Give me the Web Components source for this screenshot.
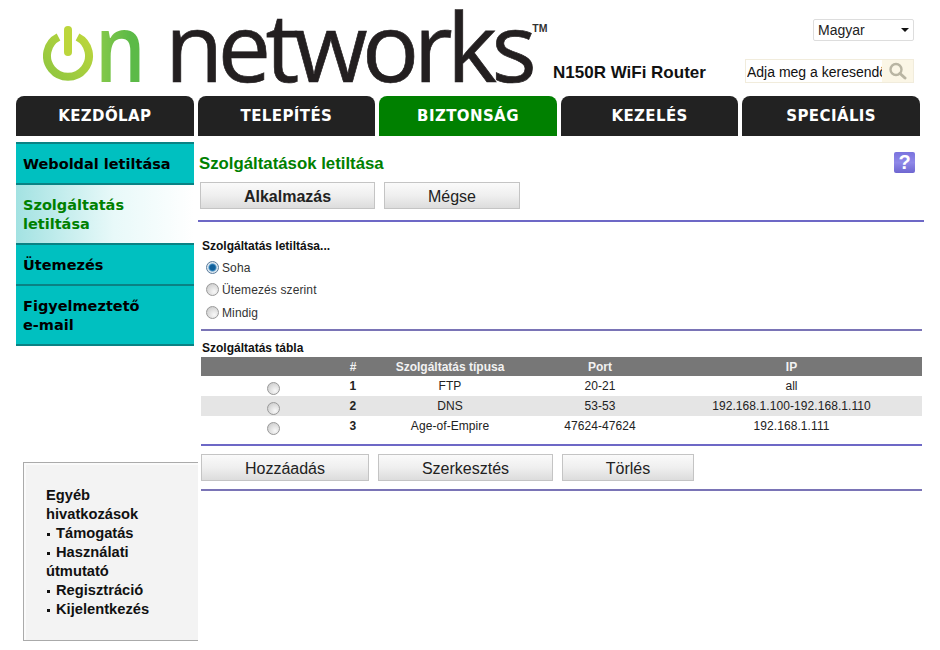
<!DOCTYPE html>
<html lang="hu">
<head>
<meta charset="utf-8">
<title>N150R WiFi Router</title>
<style>
  body { margin: 0; background: #fff; color: #222; font-family: "Liberation Sans", Arial, sans-serif; }
  .page-body { display: flex; align-items: flex-start; }
  .left-col { width: 182px; margin-left: 16px; flex: none; }
  .right-col { flex: none; width: 726px; }
  .btn-row { display: flex; gap: 9px; }
  .btn-row.top { margin: 9px 0 11px 2px; }
  .btn-row.bottom { margin: 8px 1px 8px 3px; }
</style>
</head>
<body>

<site-header></site-header>

<main-tabs>
  <tab-item>KEZDŐLAP</tab-item>
  <tab-item>TELEPÍTÉS</tab-item>
  <tab-item active>BIZTONSÁG</tab-item>
  <tab-item>KEZELÉS</tab-item>
  <tab-item>SPECIÁLIS</tab-item>
</main-tabs>

<div class="page-body">
  <div class="left-col">
    <side-menu>
      <menu-item>Weboldal letiltása</menu-item>
      <menu-item active>Szolgáltatás<br>letiltása</menu-item>
      <menu-item>Ütemezés</menu-item>
      <menu-item>Figyelmeztető<br>e-mail</menu-item>
    </side-menu>
    <other-links>
      <link-item>Támogatás</link-item>
      <link-item>Használati útmutató</link-item>
      <link-item>Regisztráció</link-item>
      <link-item>Kijelentkezés</link-item>
    </other-links>
  </div>

  <div class="right-col">
    <page-title>Szolgáltatások letiltása</page-title>
    <div class="btn-row top">
      <ui-button width="175" strong>Alkalmazás</ui-button>
      <ui-button width="136">Mégse</ui-button>
    </div>
    <h-rule wide></h-rule>

    <block-services></block-services>

    <h-rule muted></h-rule>

    <service-table></service-table>

    <h-rule></h-rule>
    <div class="btn-row bottom">
      <ui-button width="168">Hozzáadás</ui-button>
      <ui-button width="175">Szerkesztés</ui-button>
      <ui-button width="132">Törlés</ui-button>
    </div>
    <h-rule muted></h-rule>
  </div>
</div>

<script>
// header with the logo, the model name, language and search
class SiteHeader extends HTMLElement {
  constructor() {
    super();
    this.attachShadow({ mode: 'open' });
    this.shadowRoot.innerHTML = `
      <style>
        :host { display: flex; height: 96px; }
        .logo { display: flex; align-items: flex-start; margin-left: 43px; width: 510px; flex: none; }
        .logo svg { flex: none; margin-top: 26px; }
        .word {
          font: 400 95px/94px "Open Sans", sans-serif;
          letter-spacing: -5.5px;
          color: #231f20;
          -webkit-text-stroke: .7px #231f20;
          margin-top: -2px;
        }
        .on {
          width: 70px;
          font-weight: 600;
          -webkit-text-stroke: 0;
          transform: scaleX(.84);
          transform-origin: left center;
          background: linear-gradient(90deg, #8ccb4a, #5cba47 60%);
          -webkit-background-clip: text;
          background-clip: text;
          color: transparent;
        }
        .tm { font: 700 10.5px/12px "Liberation Sans", sans-serif; color: #333; margin: 22px 0 0 1px; }
        .model { font: 700 17px/20px "Liberation Sans", sans-serif; color: #111; margin-top: 63px; width: 192px; flex: none; }
        .tools { display: flex; flex-direction: column; align-items: flex-end; width: 169px; flex: none; }
        .lang {
          box-sizing: border-box; width: 101px; height: 22px; margin-top: 19px;
          display: flex; align-items: center; justify-content: space-between;
          padding: 0 4px 0 4px; border: 1px solid #ddd; border-radius: 2px;
          font: 14px "Liberation Sans", sans-serif; color: #222;
        }
        .arrow { width: 0; height: 0; border: 4px solid transparent; border-top: 4px solid #111; border-bottom: 0; }
        .search {
          box-sizing: border-box; width: 169px; height: 24px; margin-top: 18px;
          display: flex; border: 1px solid #f1ecdc;
          font: 14px/24px "Liberation Sans", sans-serif; color: #111;
        }
        .term { width: 135px; margin-left: 1px; overflow: hidden; white-space: nowrap; flex: none; }
        .go { flex: 1; display: flex; align-items: center; justify-content: center; background: #fbf6e6; }
      </style>
      <div class="logo">
        <svg width="52" height="56" viewBox="0 0 52 56">
          <defs>
            <linearGradient id="pw" x1="0" x2="1" y1="1" y2="0">
              <stop offset="0" stop-color="#8fc640"/><stop offset="1" stop-color="#bcd63c"/>
            </linearGradient>
          </defs>
          <path d="M15.5 11 A21 21 0 1 0 34.5 11" fill="none" stroke="url(#pw)" stroke-width="8"/>
          <rect x="21" y="0" width="8" height="30" rx="4" fill="#bcd63c"/>
        </svg>
        <span class="word on">n</span>
        <span class="word net">networks</span>
        <span class="tm">TM</span>
      </div>
      <div class="model">N150R WiFi Router</div>
      <div class="tools">
        <div class="lang"><span>Magyar</span><span class="arrow"></span></div>
        <div class="search">
          <span class="term">Adja meg a keresendő</span>
          <span class="go">
            <svg width="18" height="18" viewBox="0 0 18 18">
              <circle cx="7" cy="7.5" r="5.5" fill="none" stroke="#b9b5a3" stroke-width="2.4"/>
              <path d="M11 11.5 L16 16" stroke="#b9b5a3" stroke-width="3" stroke-linecap="round"/>
            </svg>
          </span>
        </div>
      </div>`;
  }
}

class MainTabs extends HTMLElement {
  constructor() {
    super();
    this.attachShadow({ mode: 'open' });
    this.shadowRoot.innerHTML = `
      <style>
        :host { display: flex; gap: 4px; margin-left: 16px; width: 904px; height: 40px; }
      </style>
      <slot></slot>`;
  }
}

class TabItem extends HTMLElement {
  constructor() {
    super();
    this.attachShadow({ mode: 'open' });
    this.shadowRoot.innerHTML = `
      <style>
        :host {
          flex: 1; display: flex; align-items: center; justify-content: center;
          background: #222; color: #fff; border-radius: 8px 8px 0 0;
          font: 700 15px "DejaVu Sans", Verdana, sans-serif; letter-spacing: .4px;
          box-sizing: border-box;
        }
        :host([active]) { background: #008000; }
      </style>
      <slot></slot>`;
  }
}

class SideMenu extends HTMLElement {
  constructor() {
    super();
    this.attachShadow({ mode: 'open' });
    this.shadowRoot.innerHTML = `
      <style>
        :host { display: block; width: 178px; margin-top: 6px; border-top: 2px solid #0a8284; }
      </style>
      <slot></slot>`;
  }
}

class MenuItem extends HTMLElement {
  constructor() {
    super();
    this.attachShadow({ mode: 'open' });
    this.shadowRoot.innerHTML = `
      <style>
        :host {
          display: block; padding: 11px 7px 9px 7px;
          background: #00c0c0; border-bottom: 2px solid #0a8284; color: #000;
          font: 700 14.5px/19px "DejaVu Sans", Verdana, sans-serif;
        }
        :host([active]) {
          background: linear-gradient(90deg, #a3e2e2, #e8f9f9 55%, #fff);
          color: #008000;
        }
      </style>
      <slot></slot>`;
  }
}

class OtherLinks extends HTMLElement {
  constructor() {
    super();
    this.attachShadow({ mode: 'open' });
    this.shadowRoot.innerHTML = `
      <style>
        :host {
          display: block; box-sizing: border-box; width: 175px; height: 179px;
          margin: 116px 0 0 7px; padding: 23px 36px 0 22px;
          background: #f3f3f3; border: 1px solid #aaa; border-right: 0;
          box-shadow: inset 2px 2px 0 #fafafa;
          font: 700 14.7px/19px "Liberation Sans", sans-serif; color: #111;
        }
      </style>
      <div>Egyéb hivatkozások</div>
      <slot></slot>`;
  }
}

class LinkItem extends HTMLElement {
  constructor() {
    super();
    this.attachShadow({ mode: 'open' });
    this.shadowRoot.innerHTML = `
      <style>
        :host { display: block; }
        .dot { display: inline-block; width: 3px; height: 3px; background: #111; margin: 0 6px 2px 1px; }
      </style>
      <span class="dot"></span><slot></slot>`;
  }
}

class PageTitle extends HTMLElement {
  constructor() {
    super();
    this.attachShadow({ mode: 'open' });
    this.shadowRoot.innerHTML = `
      <style>
        :host {
          display: flex; align-items: center; justify-content: space-between;
          height: 21px; margin-top: 16px; padding: 0 9px 0 1px;
          font: 700 16.8px "Liberation Sans", sans-serif; color: #008000;
        }
        .text { margin-top: 2px; }
        .help {
          width: 21px; height: 21px; border-radius: 2px;
          background: linear-gradient(#7a73de, #8f88e8 50%, #6e66d0);
          color: #fff; text-align: center; font: 700 20px/21px "Liberation Sans", sans-serif;
        }
      </style>
      <span class="text"><slot></slot></span>
      <span class="help">?</span>`;
  }
}

class UiButton extends HTMLElement {
  constructor() {
    super();
    this.attachShadow({ mode: 'open' });
    const weight = this.hasAttribute('strong') ? 700 : 400;
    this.shadowRoot.innerHTML = `
      <style>
        :host { display: block; }
        button {
          display: block; box-sizing: border-box; height: 27px; padding: 2px 0 0;
          width: ${this.getAttribute('width')}px;
          border: 1px solid #c4c4c4;
          background: linear-gradient(#fafafa, #efefef 50%, #dcdcdc);
          font: ${weight} 16px "Liberation Sans", sans-serif; color: #222;
        }
      </style>
      <button type="button"><slot></slot></button>`;
  }
}

class HRule extends HTMLElement {
  constructor() {
    super();
    this.attachShadow({ mode: 'open' });
    this.shadowRoot.innerHTML = `
      <style>
        :host { display: block; height: 2px; margin: 0 2px 0 3px; background: #6d68c6; }
        :host([wide]) { margin: 0; }
        :host([muted]) { background: #7a74b6; }
      </style>`;
  }
}

class UiRadio extends HTMLElement {
  constructor() {
    super();
    this.attachShadow({ mode: 'open' });
    this.shadowRoot.innerHTML = `
      <style>
        :host {
          display: inline-flex; align-items: center; gap: 3px;
          font: 12px "Liberation Sans", sans-serif; letter-spacing: .12px; color: #333;
        }
        .dot {
          width: 13px; height: 13px; box-sizing: border-box; border-radius: 50%; flex: none;
          margin-bottom: 2px;
          border: 1px solid #9a9a9a;
          background: radial-gradient(circle at 65% 70%, #f8f8f8, #d4d4d4 70%, #b8b8b8);
        }
        :host([checked]) .dot {
          border-color: #5a7c9c;
          background: radial-gradient(circle at 50% 50%, #0f5f9a 0 2.6px, #3f8cc2 3.4px, #e3ebf2 4.6px, #cfd9e2);
        }
      </style>
      <span class="dot"></span><slot></slot>`;
  }
}

class BlockServices extends HTMLElement {
  constructor() {
    super();
    this.attachShadow({ mode: 'open' });
    this.shadowRoot.innerHTML = `
      <style>
        :host { display: block; padding: 17px 0 5px 4px; }
        h4 { margin: 0 0 4px; font: 700 12px/14px "Liberation Sans", sans-serif; color: #111; }
        .opt { display: flex; height: 22px; align-items: center; padding-left: 4px; }
        .opt.last { margin-top: 1px; }
      </style>
      <h4>Szolgáltatás letiltása...</h4>
      <div class="opt"><ui-radio checked>Soha</ui-radio></div>
      <div class="opt"><ui-radio>Ütemezés szerint</ui-radio></div>
      <div class="opt last"><ui-radio>Mindig</ui-radio></div>`;
  }
}

const SERVICES = [
  ['1', 'FTP', '20-21', 'all'],
  ['2', 'DNS', '53-53', '192.168.1.100-192.168.1.110'],
  ['3', 'Age-of-Empire', '47624-47624', '192.168.1.111'],
];

class ServiceTable extends HTMLElement {
  constructor() {
    super();
    this.attachShadow({ mode: 'open' });
    const rows = SERVICES.map(r => `
      <tr>
        <td><ui-radio class="pick"></ui-radio></td>
        <td><b>${r[0]}</b></td><td>${r[1]}</td><td>${r[2]}</td><td>${r[3]}</td>
      </tr>`).join('');
    this.shadowRoot.innerHTML = `
      <style>
        :host { display: block; padding: 10px 2px 8px 3px; }
        h4 { margin: 0 0 2px; padding-left: 1px; font: 700 12px/14px "Liberation Sans", sans-serif; color: #111; }
        table { border-collapse: collapse; table-layout: fixed; width: 721px; font: 12px "Liberation Sans", sans-serif; color: #222; }
        th { height: 19px; padding: 0; background: #777; color: #f2f2f2; font-weight: 700; }
        td { height: 20px; padding: 0; text-align: center; letter-spacing: .08px; }
        tr:nth-child(even) td { background: #e5e5e5; }
        .pick { position: relative; top: 4px; }
      </style>
      <h4>Szolgáltatás tábla</h4>
      <table>
        <colgroup><col style="width:144px"><col style="width:16px"><col style="width:178px"><col style="width:122px"><col></colgroup>
        <thead><tr><th></th><th>#</th><th>Szolgáltatás típusa</th><th>Port</th><th>IP</th></tr></thead>
        <tbody>${rows}</tbody>
      </table>`;
  }
}

customElements.define('ui-radio', UiRadio);
customElements.define('site-header', SiteHeader);
customElements.define('main-tabs', MainTabs);
customElements.define('tab-item', TabItem);
customElements.define('side-menu', SideMenu);
customElements.define('menu-item', MenuItem);
customElements.define('other-links', OtherLinks);
customElements.define('link-item', LinkItem);
customElements.define('page-title', PageTitle);
customElements.define('ui-button', UiButton);
customElements.define('h-rule', HRule);
customElements.define('block-services', BlockServices);
customElements.define('service-table', ServiceTable);
</script>
</body>
</html>
